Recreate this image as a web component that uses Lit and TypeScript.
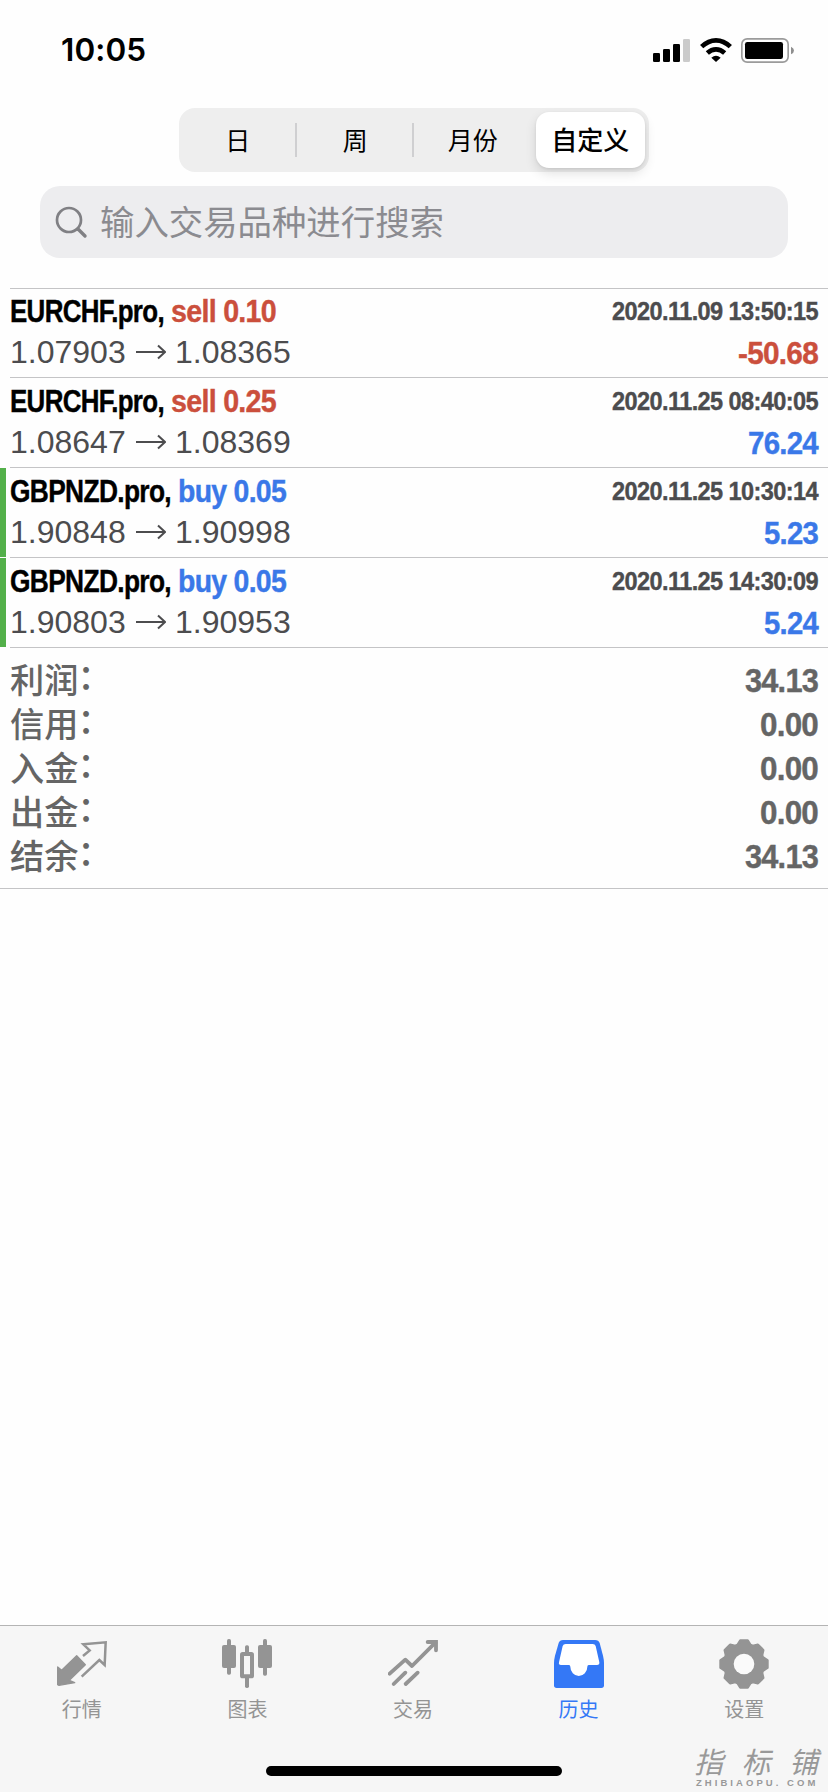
import { LitElement, html, svg, css } from "lit";
import { customElement, property } from "lit/decorators.js";
import { classMap } from "lit/directives/class-map.js";

// Single line of condensed bold text, squeezed to a given advance width.
@customElement("condensed-text")
class CondensedText extends LitElement {
  @property() text = "";
  @property({ type: Number }) width = 100;
  @property({ type: Number }) size = 32;

  static styles = css`
    :host { display: block; flex: none; font-family: "Liberation Sans", Arial, sans-serif; font-weight: 700; }
    .box { display: flex; }
    .run { flex: none; white-space: pre; line-height: 1; letter-spacing: -0.025em; transform-origin: 0 0; -webkit-text-stroke: 0.4px currentColor; }
  `;

  updated() {
    const run = this.renderRoot.querySelector(".run") as HTMLElement;
    run.style.transform = "none";
    const natural = run.getBoundingClientRect().width;
    if (natural > 0) run.style.transform = `scaleX(${this.width / natural})`;
  }

  render() {
    return html`<div class="box" style="width:${this.width}px;font-size:${this.size}px"><span class="run">${this.text}</span></div>`;
  }
}

interface Deal {
  symbol: string; symbolW: number; side: "buy" | "sell"; volume: string; sideW: number;
  open: string; close: string; time: string; profit: string; profitW: number; marked: boolean;
}

const deals: Deal[] = [
  { symbol: "EURCHF.pro,", symbolW: 154, side: "sell", volume: "0.10", sideW: 105, open: "1.07903", close: "1.08365", time: "2020.11.09 13:50:15", profit: "-50.68", profitW: 80, marked: false },
  { symbol: "EURCHF.pro,", symbolW: 154, side: "sell", volume: "0.25", sideW: 105, open: "1.08647", close: "1.08369", time: "2020.11.25 08:40:05", profit: "76.24", profitW: 70, marked: false },
  { symbol: "GBPNZD.pro,", symbolW: 161, side: "buy", volume: "0.05", sideW: 108, open: "1.90848", close: "1.90998", time: "2020.11.25 10:30:14", profit: "5.23", profitW: 54, marked: true },
  { symbol: "GBPNZD.pro,", symbolW: 161, side: "buy", volume: "0.05", sideW: 108, open: "1.90803", close: "1.90953", time: "2020.11.25 14:30:09", profit: "5.24", profitW: 54, marked: true },
];

const totals = [
  { label: "利润", value: "34.13", w: 73 },
  { label: "信用", value: "0.00", w: 58 },
  { label: "入金", value: "0.00", w: 58 },
  { label: "出金", value: "0.00", w: 58 },
  { label: "结余", value: "34.13", w: 73 },
];

function gearPath(cx: number, cy: number): string {
  const pts: string[] = [];
  for (let k = 0; k < 8; k++) {
    for (const [r, d] of [[60, -19], [71, -9], [71, 9], [60, 19]]) {
      const a = ((k * 45 + d) * Math.PI) / 180;
      pts.push(`${(cx + r * Math.cos(a)).toFixed(1)} ${(cy + r * Math.sin(a)).toFixed(1)}`);
    }
  }
  return `M${pts.join("L")}Z`;
}

const tabs = [
  {
    label: "行情", active: false, box: "171 87 150 150",
    icon: svg`<path fill="currentColor" stroke="currentColor" stroke-width="4" stroke-linejoin="round" d="M230 137L256 164L208 211L224 218L177 226L173 224V171L185 181Z"/>
      <path fill="none" stroke="currentColor" stroke-width="7.5" d="M249 138L269 121L250 103L317 97L314 165L298 150L245 200"/>`,
  },
  {
    label: "图表", active: false, box: "669 87 150 150",
    icon: svg`<g fill="currentColor"><rect x="669" y="105" width="42" height="69" rx="6"/><rect x="684" y="87" width="12" height="107" rx="5"/>
      <rect x="777" y="105" width="42" height="69" rx="6"/><rect x="792" y="87" width="12" height="110" rx="5"/>
      <rect x="738" y="106" width="12" height="30" rx="5"/><rect x="738" y="198" width="12" height="36" rx="5"/></g>
      <rect x="729" y="132" width="30" height="67" rx="2" fill="none" stroke="currentColor" stroke-width="12"/>`,
  },
  {
    label: "交易", active: false, box: "264 87 150 150",
    icon: svg`<g fill="none" stroke="currentColor" stroke-width="11.5" stroke-linecap="round" stroke-linejoin="round">
      <path d="M269 191L316 149L336 168L406 98"/><path stroke-linejoin="miter" d="M383 96H408V121"/><path d="M281 222L316 188M317 222L353 188"/></g>`,
  },
  {
    label: "历史", active: true, box: "759 87 150 150",
    icon: svg`<path fill="currentColor" d="M786 90H882Q893 90 896 99L906 137Q909 149 909 160V226Q909 234 901 234H767Q759 234 759 226V160Q759 149 762 137L773 99Q776 90 786 90Z"/>
      <path fill="#fff" d="M794 102H875Q882 102 884 108L895 157Q896 165 888 165H863Q859 165 859 170A25.5 28 0 0 1 808 170Q808 165 804 165H780Q772 165 774 157L785 108Q787 102 794 102Z"/>`,
  },
  {
    label: "设置", active: false, box: "477 87 150 150",
    icon: svg`<path fill="currentColor" stroke="currentColor" stroke-width="8" stroke-linejoin="round" d=${gearPath(552, 162)}/>
      <circle cx="552" cy="162" r="31" fill="#fafafa"/>`,
  },
];

@customElement("app-root")
class AppRoot extends LitElement {
  static styles = css`
    :host {
      display: flex; flex-direction: column; box-sizing: border-box; width: 828px; height: 1792px;
      background: #fefefe; color: #000; overflow: hidden;
      font-family: "Liberation Sans", "Noto Sans CJK SC", sans-serif;
    }
    svg { display: block; flex: none; }
    .status { display: flex; justify-content: space-between; align-items: center; height: 99px; padding: 0 34px 0 61px; box-sizing: border-box; }
    .clock { font: 600 31.5px/40px Inter, sans-serif; letter-spacing: 0.1px; }
    .indicators { display: flex; align-items: center; }
    .wifi { margin: 0 9px 0 10px; }
    .segments {
      display: grid; grid-template-columns: repeat(4, 1fr); width: 470px; height: 64px; margin: 9px 0 0 179px;
      border-radius: 16px; background: #eeeeee; box-sizing: border-box; flex: none;
    }
    .segment { display: flex; align-items: center; justify-content: center; font: 400 25px/36px "Noto Sans CJK SC", sans-serif; padding-bottom: 3px; }
    .segment.ruled { background: linear-gradient(#cfcfd1, #cfcfd1) right center / 2px 34px no-repeat; }
    .segment.chosen {
      margin: 4px; background: #fff; border-radius: 13px; font-weight: 500; font-size: 26px;
      box-shadow: 0 5px 12px rgba(0,0,0,.12), 0 1px 3px rgba(0,0,0,.08);
    }
    .search {
      display: flex; align-items: center; gap: 12px; width: 748px; height: 72px; margin: 14px 0 30px 40px; padding-left: 15px;
      box-sizing: border-box; border-radius: 20px; background: #ededef; flex: none; color: #8b8b90;
      font: 400 34.4px/50px "Noto Sans CJK SC", sans-serif;
    }
    .hint { padding-bottom: 4px; }
    .deals { display: flex; flex-direction: column; }
    .deal { display: flex; height: 90px; box-sizing: border-box; }
    .deal:first-child { height: 89px; }
    .deal:first-child .body { padding-top: 6px; }
    .flag { width: 6px; margin: 1px 4px 0 0; flex: none; }
    .flag.on { background: #53b04a; }
    .body { flex: 1; border-top: 1px solid #c4c4c6; display: flex; flex-direction: column; padding: 7px 10px 0 0; }
    .line { display: flex; justify-content: space-between; height: 40px; }
    .name { display: flex; gap: 7px; }
    .sell { color: #cb4f3c; }
    .buy { color: #3a78e8; }
    .time { color: #4c4c4e; padding-top: 3px; }
    .prices { display: flex; align-items: center; gap: 9px; color: #4c4c4e; font-size: 32px; line-height: 36px; height: 34px; }
    .price { width: 117px; }
    .profit { padding-top: 2px; }
    .totals { border-top: 1px solid #c4c4c6; margin-left: 10px; padding: 10px 10px 10px 0; color: #656565; }
    .total { display: flex; justify-content: space-between; height: 44px; }
    .label { display: flex; font: 500 34.2px/40px "Noto Sans CJK SC", sans-serif; }
    .colon { line-height: 33px; margin-left: -1px; }
    .amount { padding-top: 5px; }
    .end { height: 1px; background: #c4c4c6; flex: none; }
    .space { flex: 1; }
    .bar { height: 167px; box-sizing: border-box; border-top: 1px solid #b4b4b4; background: #f6f6f6; display: flex; flex-direction: column; flex: none; position: relative; }
    .tabs { display: grid; grid-template-columns: repeat(5, 1fr); margin: 0 1px 0 -1px; padding-top: 13px; }
    .tab { display: flex; flex-direction: column; align-items: center; gap: 5px; color: #949494; font: 400 20px/30px "Noto Sans CJK SC", sans-serif; }
    .tab.active { color: #3478f6; }
    .home { width: 296px; height: 10px; border-radius: 5px; background: #000; margin: 42px auto 0; }
    .mark { position: absolute; right: 6px; bottom: 3px; width: 128px; color: #999; display: flex; flex-direction: column; }
    .brush { display: flex; justify-content: space-between; font: italic 400 29px/34px "Noto Sans CJK SC", sans-serif; padding-right: 4px; }
    .site { font: 700 9.5px/12px "Liberation Sans", sans-serif; letter-spacing: 3.05px; white-space: nowrap; padding-left: 2px; }
  `;

  render() {
    const segments = ["日", "周", "月份", "自定义"];
    return html`
      <header class="status">
        <div class="clock">10:05</div>
        <div class="indicators">
          <svg width="37" height="26" viewBox="717 108 111 78">
            <rect x="717" y="156" width="21" height="27" rx="4"/><rect x="747" y="144" width="21" height="39" rx="4"/>
            <rect x="777" y="129" width="21" height="54" rx="4"/><rect x="807" y="114" width="21" height="69" rx="4" fill="#cbcbcb"/>
          </svg>
          <svg class="wifi" width="32" height="26" viewBox="857 108 96 78">
            <g fill="none" stroke="#000" stroke-width="14"><path d="M862 137Q882 118 905 118T948 137"/><path d="M879 156Q891 145 905 145T931 156"/></g>
            <path d="M905 183L891 170Q905 159 919 170Z"/>
          </svg>
          <svg width="53" height="26" viewBox="981 108 159 78">
            <rect x="983.5" y="113.5" width="139" height="70" rx="16" fill="none" stroke="#9b9b9b" stroke-width="5"/>
            <rect x="993" y="123" width="114" height="51" rx="7"/><path fill="#8f8f8f" d="M1131 137Q1140 141 1140 148.500T1131 160Z"/>
          </svg>
        </div>
      </header>
      <nav class="segments">
        ${segments.map((s, i) => html`<div class=${classMap({ segment: true, ruled: i < 2, chosen: i === 3 })}>${s}</div>`)}
      </nav>
      <div class="search">
        <svg width="33" height="33" viewBox="0 0 33 33" fill="none" stroke="#808084" stroke-linecap="round">
          <circle cx="14" cy="14" r="12" stroke-width="2.7"/><path stroke-width="3.4" d="M23 23L30 30"/>
        </svg>
        <span class="hint">输入交易品种进行搜索</span>
      </div>
      <main class="deals">
        ${deals.map((d) => html`
          <article class="deal">
            <div class=${classMap({ flag: true, on: d.marked })}></div>
            <div class="body">
              <div class="line">
                <div class="name">
                  <condensed-text .text=${d.symbol} .width=${d.symbolW} .size=${32}></condensed-text>
                  <condensed-text class=${d.side} .text=${`${d.side} ${d.volume}`} .width=${d.sideW} .size=${32}></condensed-text>
                </div>
                <condensed-text class="time" .text=${d.time} .width=${206} .size=${26}></condensed-text>
              </div>
              <div class="line">
                <div class="prices">
                  <span class="price">${d.open}</span>
                  <svg width="30" height="16" viewBox="0 0 30 16" fill="none" stroke="#4c4c4e" stroke-width="2"><path d="M0 8H29M22 1.500L29 8L22 14.500"/></svg>
                  <span class="price">${d.close}</span>
                </div>
                <condensed-text class="profit ${d.profit.startsWith("-") ? "sell" : "buy"}" .text=${d.profit} .width=${d.profitW} .size=${32}></condensed-text>
              </div>
            </div>
          </article>`)}
      </main>
      <section class="totals">
        ${totals.map((t) => html`<div class="total"><div class="label"><span>${t.label}</span><span class="colon">：</span></div>
          <condensed-text class="amount" .text=${t.value} .width=${t.w} .size=${34}></condensed-text></div>`)}
      </section>
      <div class="end"></div>
      <div class="space"></div>
      <footer class="bar">
        <nav class="tabs">
          ${tabs.map((t) => html`<div class=${classMap({ tab: true, active: t.active })}>
            <svg width="50" height="50" viewBox=${t.box}>${t.icon}</svg><span>${t.label}</span></div>`)}
        </nav>
        <div class="home"></div>
        <div class="mark">
          <div class="brush"><span>指</span><span>标</span><span>铺</span></div>
          <div class="site">ZHIBIAOPU. COM</div>
        </div>
      </footer>
    `;
  }
}
